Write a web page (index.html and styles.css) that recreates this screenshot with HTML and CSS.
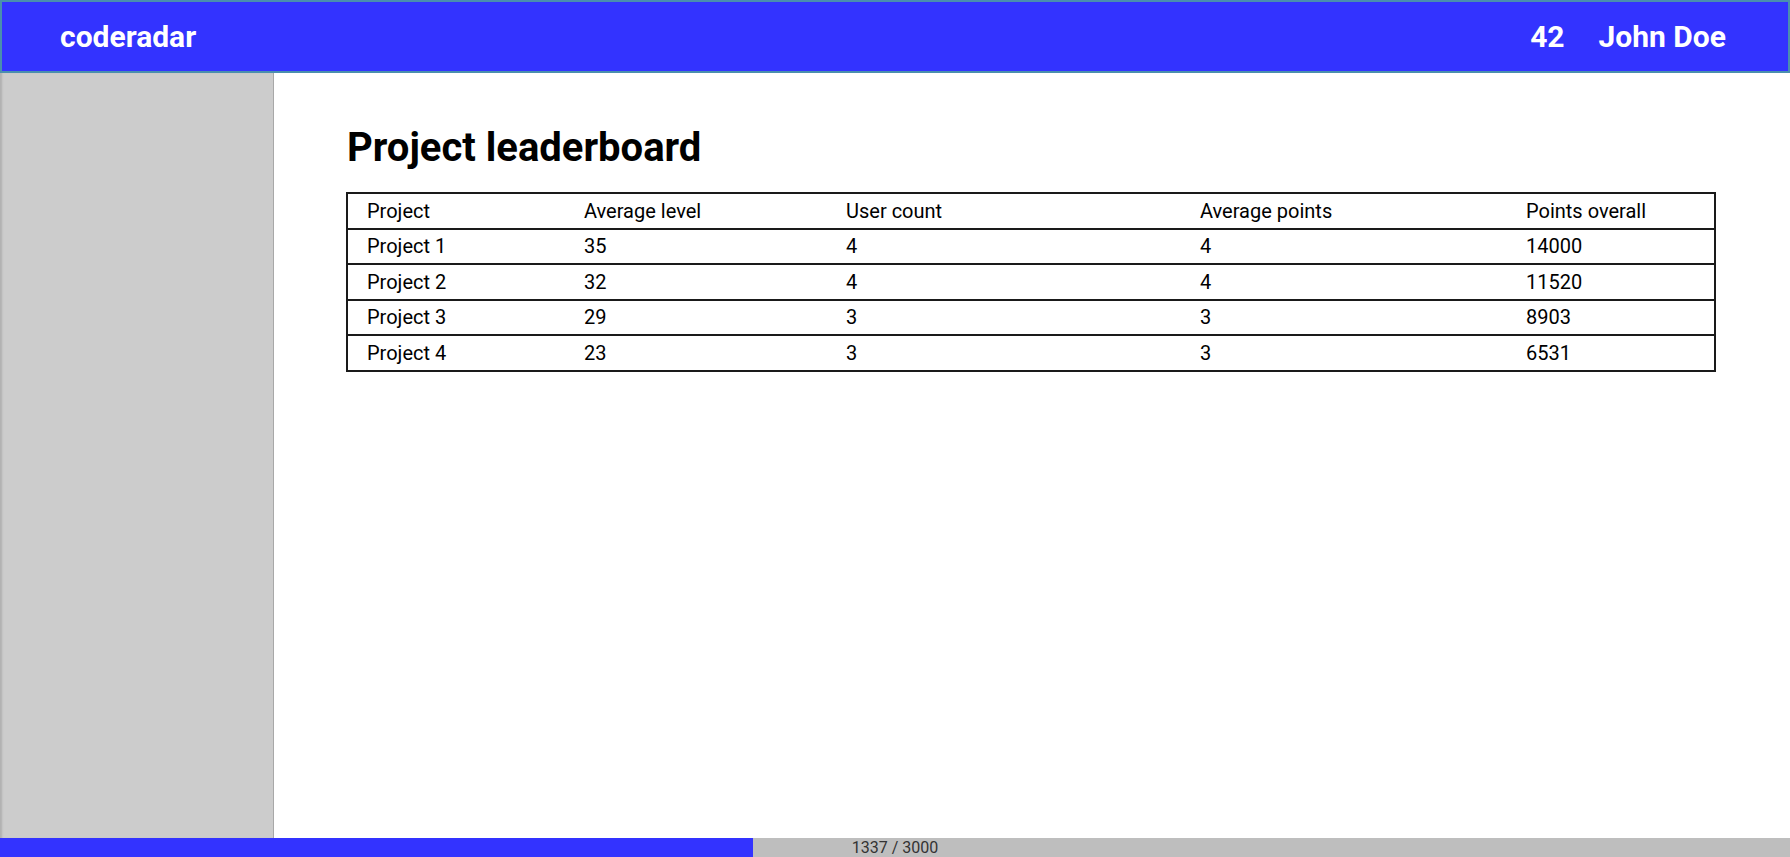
FILE: index.html
```html
<!DOCTYPE html>
<html>
<head>
<meta charset="utf-8">
<link rel="stylesheet" href="styles.css">
</head>
<body>
<div class="app">
  <header class="topbar">
    <div class="brand">coderadar</div>
    <div class="user">
      <span class="level">42</span>
      <span class="name">John Doe</span>
    </div>
  </header>
  <div class="middle">
    <aside class="sidebar"></aside>
    <main class="content">
      <h1 class="title">Project leaderboard</h1>
      <table class="board">
        <colgroup>
          <col class="c1"><col class="c2"><col class="c3"><col class="c4"><col class="c5">
        </colgroup>
        <thead>
          <tr><th>Project</th><th>Average level</th><th>User count</th><th>Average points</th><th>Points overall</th></tr>
        </thead>
        <tbody>
          <tr><td>Project 1</td><td>35</td><td>4</td><td>4</td><td>14000</td></tr>
          <tr><td>Project 2</td><td>32</td><td>4</td><td>4</td><td>11520</td></tr>
          <tr><td>Project 3</td><td>29</td><td>3</td><td>3</td><td>8903</td></tr>
          <tr><td>Project 4</td><td>23</td><td>3</td><td>3</td><td>6531</td></tr>
        </tbody>
      </table>
    </main>
  </div>
  <footer class="progress">
    <div class="fill" style="width: 753px"></div>
    <div class="label">1337 / 3000</div>
  </footer>
</div>
</body>
</html>
```
FILE: styles.css
```css
* { box-sizing: border-box; }
html, body { margin: 0; padding: 0; height: 100%; }
body { font-family: Roboto, "Liberation Sans", sans-serif; color: #000; background: #fff; }
.app { display: flex; flex-direction: column; height: 100vh; }
.topbar {
  height: 73px;
  flex: 0 0 73px;
  background: #3333ff;
  border: 2px solid #4a8fae;
  display: flex;
  align-items: center;
  justify-content: space-between;
  padding: 0 62px 0 58px;
  color: #fff;
  font-weight: 700;
  font-size: 30px;
}
.user { display: flex; gap: 34px; }
.middle { flex: 1; display: flex; min-height: 0; }
.sidebar {
  width: 274px;
  flex: 0 0 274px;
  background: #cccccc;
  border-right: 1px solid #a8a8a8;
  box-shadow: inset 3px 0 2px -1px #b0b0b0;
}
.content { flex: 1; padding: 42px 74px 0 72px; }
.title { font-size: 40px; font-weight: 700; margin: 9px 0 20px 1px; line-height: 48px; }
.board { width: 100%; border-collapse: collapse; border: 2px solid #1a1a1a; font-size: 20px; }
.board th, .board td {
  text-align: left;
  font-weight: 400;
  padding: 0 0 0 19px;
  height: 35.5px;
  border-bottom: 2px solid #1a1a1a;
}
.c1 { width: 218px; }
.c2 { width: 262px; }
.c3 { width: 354px; }
.c4 { width: 326px; }
.progress { flex: 0 0 19px; height: 19px; background: #bebebe; position: relative; }
.fill { height: 100%; background: #3333ff; }
.label {
  position: absolute; inset: 0;
  text-align: center; font-size: 16px; line-height: 19px; color: #333;
}
```
